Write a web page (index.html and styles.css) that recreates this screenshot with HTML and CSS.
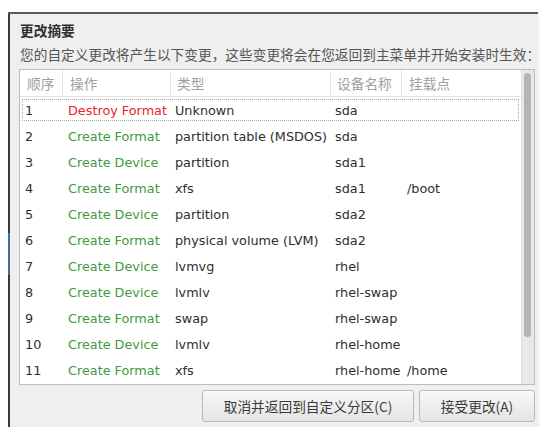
FILE: index.html
```html
<!DOCTYPE html>
<html lang="zh-CN">
<head>
<meta charset="utf-8">
<title>更改摘要</title>
<link rel="stylesheet" href="styles.css">
</head>
<body>
<div class="frame">
  <div class="edge"></div>
  <div class="dialog">
    <div class="title">更改摘要</div>
    <div class="subtitle">您的自定义更改将产生以下变更，这些变更将会在您返回到主菜单并开始安装时生效：</div>
    <div class="table">
      <div class="grid">
        <div class="row head">
          <div class="c">顺序</div><div class="c">操作</div><div class="c">类型</div><div class="c">设备名称</div><div class="c">挂载点</div>
        </div>
        <div class="row focused"><div class="c">1</div><div class="c red">Destroy Format</div><div class="c">Unknown</div><div class="c">sda</div><div class="c"></div></div>
        <div class="row"><div class="c">2</div><div class="c green">Create Format</div><div class="c">partition table (MSDOS)</div><div class="c">sda</div><div class="c"></div></div>
        <div class="row"><div class="c">3</div><div class="c green">Create Device</div><div class="c">partition</div><div class="c">sda1</div><div class="c"></div></div>
        <div class="row"><div class="c">4</div><div class="c green">Create Format</div><div class="c">xfs</div><div class="c">sda1</div><div class="c">/boot</div></div>
        <div class="row"><div class="c">5</div><div class="c green">Create Device</div><div class="c">partition</div><div class="c">sda2</div><div class="c"></div></div>
        <div class="row"><div class="c">6</div><div class="c green">Create Format</div><div class="c">physical volume (LVM)</div><div class="c">sda2</div><div class="c"></div></div>
        <div class="row"><div class="c">7</div><div class="c green">Create Device</div><div class="c">lvmvg</div><div class="c">rhel</div><div class="c"></div></div>
        <div class="row"><div class="c">8</div><div class="c green">Create Device</div><div class="c">lvmlv</div><div class="c">rhel-swap</div><div class="c"></div></div>
        <div class="row"><div class="c">9</div><div class="c green">Create Format</div><div class="c">swap</div><div class="c">rhel-swap</div><div class="c"></div></div>
        <div class="row"><div class="c">10</div><div class="c green">Create Device</div><div class="c">lvmlv</div><div class="c">rhel-home</div><div class="c"></div></div>
        <div class="row"><div class="c">11</div><div class="c green">Create Format</div><div class="c">xfs</div><div class="c">rhel-home</div><div class="c">/home</div></div>
      </div>
      <div class="scrollbar"><div class="thumb"></div></div>
    </div>
    <div class="buttons">
      <button class="btn cancel">取消并返回到自定义分区(C)</button>
      <button class="btn accept">接受更改(A)</button>
    </div>
  </div>
</div>
</body>
</html>
```

FILE: styles.css
```css
html, body {
  margin: 0;
  padding: 0;
  background: #ffffff;
}
body {
  font-family: "DejaVu Sans", "Noto Sans CJK SC", sans-serif;
  color: #333333;
}
.frame {
  display: flex;
  margin: 12px 0 0 8px;
  width: 530px;
  height: 415px;
  border-top: 2px solid #5a5a5a;
  box-sizing: border-box;
  box-shadow: 1px 1px 2px rgba(0,0,0,0.08);
}
.edge {
  width: 2px;
  flex: none;
  background: linear-gradient(to bottom, #3a3a3a 0, #3a3a3a 219px, #3d6e9e 219px, #3d6e9e 261px, #3a3a3a 261px, #3a3a3a 100%);
}
.dialog {
  flex: 1;
  min-width: 0;
  background: #efefef;
  padding: 6px 3px 0 9px;
  display: flex;
  flex-direction: column;
}
.title {
  font-family: "Noto Sans CJK SC", sans-serif;
  font-weight: bold;
  font-size: 13.7px;
  line-height: 20px;
  color: #2e2e2e;
  padding-left: 1px;
}
.subtitle {
  font-family: "Noto Sans CJK SC", sans-serif;
  font-size: 13.7px;
  line-height: 20px;
  color: #555555;
  margin-top: 4px;
  padding-left: 1px;
  white-space: nowrap;
}
.table {
  margin-top: 5px;
  height: 316px;
  box-sizing: border-box;
  border: 1px solid #bdbdbd;
  background: #ffffff;
  display: flex;
}
.grid {
  flex: 1;
  min-width: 0;
  display: flex;
  flex-direction: column;
}
.row {
  display: grid;
  grid-template-columns: 43px 108px 160px 71px 1fr;
  height: 26px;
  align-items: center;
  font-size: 12.8px;
  color: #2e2e2e;
  white-space: nowrap;
}
.row .c {
  padding-left: 5px;
  overflow: hidden;
}
.row .c:nth-child(3), .row .c:nth-child(4) {
  padding-left: 4px;
}
.row.head {
  height: 26px;
  border-bottom: 1px solid #e2e2e2;
  align-items: stretch;
  font-family: "Noto Sans CJK SC", sans-serif;
  font-size: 13.7px;
  color: #a0a0a0;
}
.row.head .c {
  display: flex;
  align-items: center;
  padding-left: 7px;
  border-right: 1px solid #e6e6e6;
}
.row.head .c:nth-child(3), .row.head .c:nth-child(4) {
  padding-left: 6px;
}
.row.head .c:last-child {
  border-right: none;
}
.row.focused {
  outline: 1px dotted #a8a8a8;
  outline-offset: -3px;
}
.red {
  color: #e8262e;
}
.green {
  color: #3e9b3e;
}
.scrollbar {
  width: 13px;
  flex: none;
  background: #e8e8e8;
  border-left: 1px solid #dddddd;
  box-sizing: border-box;
  padding: 3px 3px 0 2px;
}
.thumb {
  height: 264px;
  border-radius: 4px;
  background: #b4b4b4;
}
.buttons {
  display: flex;
  justify-content: flex-end;
  gap: 5px;
  margin-top: 5px;
}
.btn {
  font-family: "Noto Sans CJK SC", sans-serif;
  font-size: 13.7px;
  color: #3a3a3a;
  height: 32px;
  border: 1px solid #b9b9b9;
  border-radius: 3px;
  background: linear-gradient(to bottom, #f8f8f8, #e4e4e4);
  padding: 0;
  box-shadow: 0 1px 0 rgba(255,255,255,0.6) inset;
}
.cancel {
  width: 212px;
}
.accept {
  width: 116px;
}
```
